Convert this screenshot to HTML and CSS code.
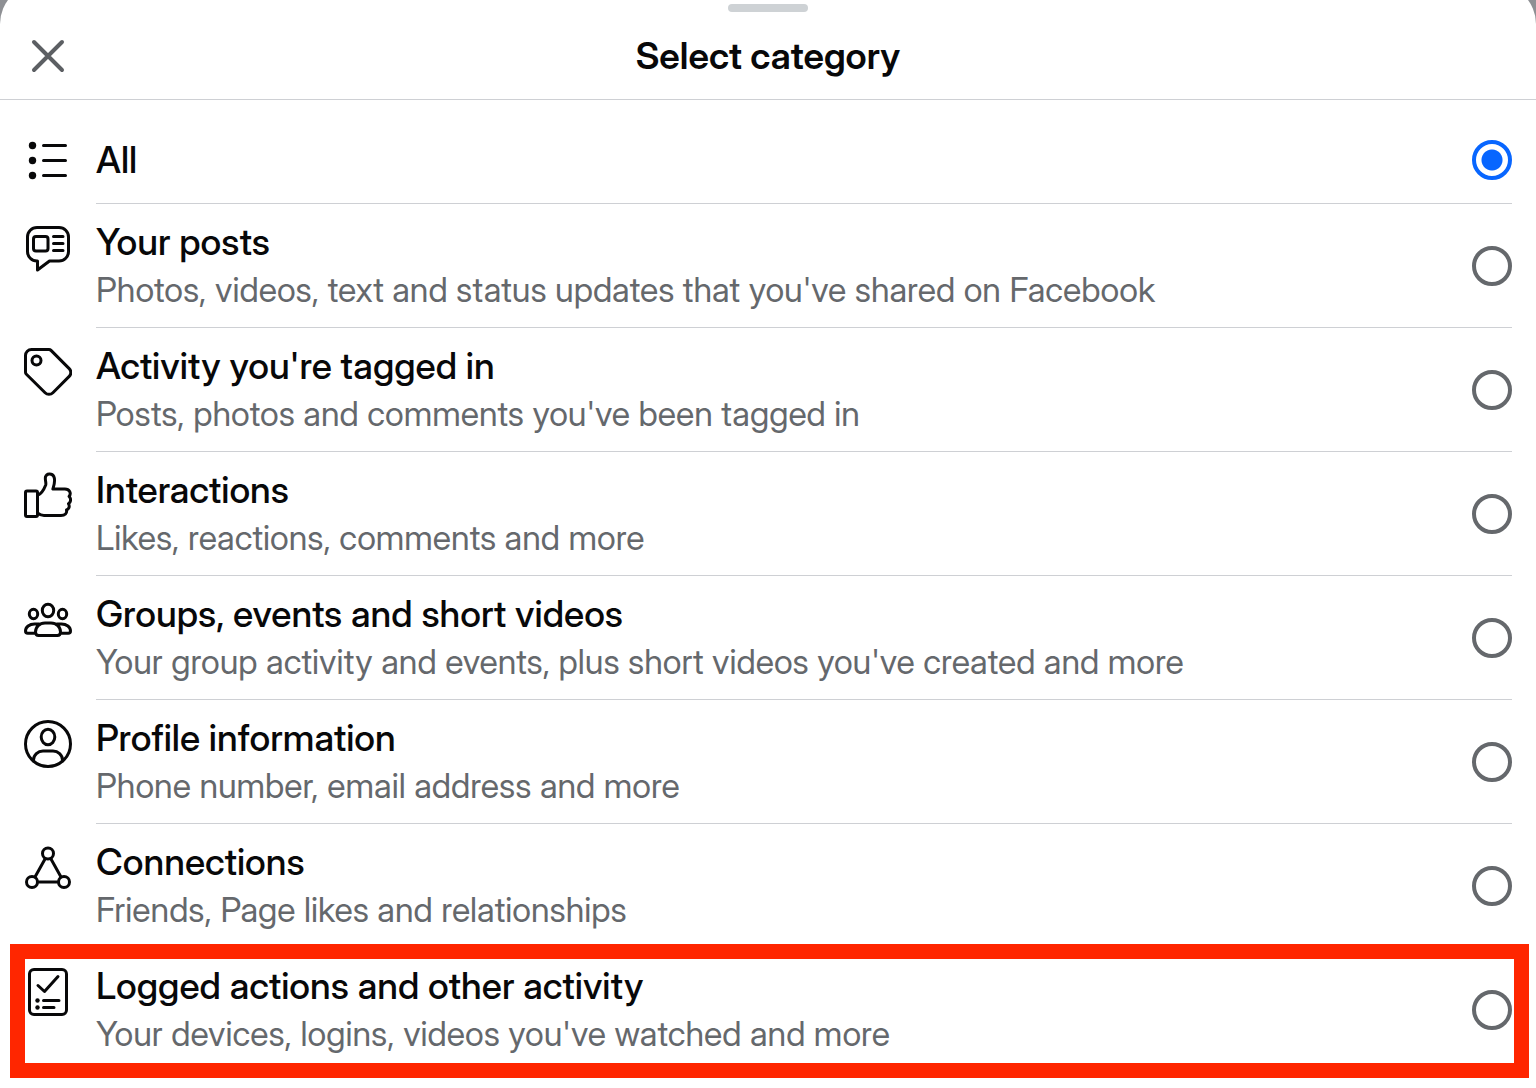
FILE: index.html
```html
<!DOCTYPE html>
<html lang="en">
<head>
<meta charset="utf-8">
<meta name="viewport" content="width=device-width, initial-scale=1">
<title>Select category</title>
<link rel="stylesheet" href="styles.css">
</head>
<body>
<main class="sheet">
  <div class="handle"></div>
  <header class="header">
    <button class="close" type="button" aria-label="Close">
      <svg class="icon close-icon" viewBox="0 0 48 48"><path d="M10 10l28 28M38 10l-28 28"/></svg>
    </button>
    <h1 class="heading">Select category</h1>
  </header>
  <form class="list">
    <label class="row row-single">
      <svg class="icon" viewBox="0 0 48 48"><g fill="currentColor" stroke="none"><circle cx="8.500" cy="9.500" r="3.700"/><circle cx="8.500" cy="24.500" r="3.700"/><circle cx="8.500" cy="39.500" r="3.700"/></g><path d="M19.500 9.500h22M19.500 24.500h22M19.500 39.500h22"/></svg>
      <span class="body"><span class="text"><span class="title">All</span></span><input class="radio" type="radio" name="category" checked></span>
    </label>
    <label class="row">
      <svg class="icon" viewBox="0 0 48 48"><path d="M13 3.500h22a9.500 9.500 0 0 1 9.500 9.500v14.500a9.500 9.500 0 0 1-9.500 9.500H25.500L13.500 46v-9H13a9.500 9.500 0 0 1-9.500-9.500V13A9.500 9.500 0 0 1 13 3.500z"/><rect x="9.500" y="12.500" width="14.500" height="14.500" rx="2.500"/><path d="M29.500 12.500h9.500M29.500 19.500h9.500M29.500 26.500h9.500"/></svg>
      <span class="body"><span class="text"><span class="title">Your posts</span><span class="desc">Photos, videos, text and status updates that you've shared on Facebook</span></span><input class="radio" type="radio" name="category"></span>
    </label>
    <label class="row">
      <svg class="icon" viewBox="0 0 48 48"><path d="M7.500 1.500h17.300a3 3 0 0 1 2.200.9l18.200 18.200a5.500 5.500 0 0 1 0 7.800L28.900 44.700a5.500 5.500 0 0 1-7.800 0L2.400 26.300a3 3 0 0 1-.9-2.200V7.500a6 6 0 0 1 6-6z"/><circle cx="12.500" cy="12.500" r="4.500"/></svg>
      <span class="body"><span class="text"><span class="title">Activity you're tagged in</span><span class="desc">Posts, photos and comments you've been tagged in</span></span><input class="radio" type="radio" name="category"></span>
    </label>
    <label class="row">
      <svg class="icon" viewBox="0 0 48 48"><rect x="1.500" y="19" width="12" height="25.500" rx="1.500"/><path d="M13.500 23.500c4.500-2 6.500-6 8.200-10.500.7-2-.9-5.500-.2-8 .9-3.600 6.500-4 8.300-.5 1.900 3.900.5 8-.9 12.500h12c4.500 0 6.800 4 4.200 7.500 2.200 2.200 1.900 5.500-.6 7.300 1.500 2.500.5 5.200-2 6.200.7 3.200-1.500 5.500-5.500 5.500H20c-3 0-4.500-1-6.500-2.500"/></svg>
      <span class="body"><span class="text"><span class="title">Interactions</span><span class="desc">Likes, reactions, comments and more</span></span><input class="radio" type="radio" name="category"></span>
    </label>
    <label class="row">
      <svg class="icon" viewBox="0 0 48 48"><ellipse cx="24" cy="14.500" rx="5.700" ry="6.300"/><ellipse cx="9.500" cy="18" rx="4.200" ry="4.700"/><ellipse cx="38.500" cy="18" rx="4.200" ry="4.700"/><path d="M21 27h6c5.500 0 9.500 4 9.500 9 0 2.300-1 3.500-3.200 3.500H14.700c-2.200 0-3.200-1.200-3.200-3.500 0-5 4-9 9.500-9zM15 28h-4.500c-5 0-9 3-9 7 0 1.500.8 2.300 2.300 2.300h7.500M33 28h4.500c5 0 9 3 9 7 0 1.500-.8 2.300-2.300 2.300h-7.500"/></svg>
      <span class="body"><span class="text"><span class="title">Groups, events and short videos</span><span class="desc">Your group activity and events, plus short videos you've created and more</span></span><input class="radio" type="radio" name="category"></span>
    </label>
    <label class="row">
      <svg class="icon" viewBox="0 0 48 48"><circle cx="24" cy="24" r="22.500"/><ellipse cx="24" cy="17" rx="6.800" ry="7.700"/><path d="M9.500 41v-1c0-5 4.500-9 9.500-9h10c5 0 9.500 4 9.500 9v1"/></svg>
      <span class="body"><span class="text"><span class="title">Profile information</span><span class="desc">Phone number, email address and more</span></span><input class="radio" type="radio" name="category"></span>
    </label>
    <label class="row">
      <svg class="icon" viewBox="0 0 48 48"><circle cx="24" cy="9.500" r="5.500"/><circle cx="8" cy="38" r="5.500"/><circle cx="40" cy="38" r="5.500"/><path d="M21.300 14.500L11 33M26.700 14.500L37 33M13.500 38h21"/></svg>
      <span class="body"><span class="text"><span class="title">Connections</span><span class="desc">Friends, Page likes and relationships</span></span><input class="radio" type="radio" name="category"></span>
    </label>
    <label class="row row-marked">
      <svg class="icon" viewBox="0 0 48 48"><rect x="5.500" y="1.500" width="37" height="45" rx="4.500"/><path d="M14 17.500l6.500 6 13.500-15M19.500 32.500h15.500M19.500 39.500h10.500"/><g fill="currentColor" stroke="none"><circle cx="13.500" cy="32.500" r="2.200"/><circle cx="13.500" cy="39.500" r="2.200"/></g></svg>
      <span class="body"><span class="text"><span class="title">Logged actions and other activity</span><span class="desc">Your devices, logins, videos you've watched and more</span></span><input class="radio" type="radio" name="category"></span>
    </label>
  </form>
</main>
</body>
</html>
```
FILE: styles.css
```css
* {
  box-sizing: border-box;
}

html {
  background: #8e9094;
}

body {
  margin: 0;
  font-family: "Inter Display", Inter, "Liberation Sans", sans-serif;
  color: #080809;
}

.sheet {
  display: flow-root;
  min-height: calc(100vh + 16px);
  margin-top: -16px;
  padding-top: 20px;
  background: #fff;
  border-radius: 40px 40px 0 0;
}

.handle {
  width: 80px;
  height: 8px;
  margin: 0 auto;
  border-radius: 4px;
  background: #ced2d5;
}

.header {
  display: grid;
  grid-template-columns: 48px 1fr 48px;
  align-items: center;
  height: 88px;
  padding: 0 24px;
  border-bottom: 1px solid #ced0d4;
}

.close {
  width: 48px;
  height: 48px;
  padding: 0;
  border: 0;
  background: none;
  color: #5c5f63;
}

.heading {
  margin: 0;
  font-size: 37px;
  font-weight: 600;
  line-height: 48px;
  text-align: center;
}

.icon {
  display: block;
  flex: none;
  width: 48px;
  height: 48px;
  fill: none;
  stroke: currentColor;
  stroke-width: 3;
  stroke-linecap: round;
  stroke-linejoin: round;
}

.close-icon {
  stroke-width: 4;
}

.list {
  padding-top: 16px;
}

.row {
  position: relative;
  display: flex;
  gap: 24px;
  padding: 0 24px;
}

.row > .icon {
  margin-top: 20px;
}

.body {
  display: flex;
  flex: 1;
  align-items: center;
  justify-content: space-between;
  gap: 24px;
  padding: 14px 0 13px;
  border-bottom: 1px solid #ced0d4;
}

.row-single .body {
  padding: 20px 0 19px;
}

.title,
.desc {
  display: block;
  line-height: 48px;
}

.title {
  font-size: 37px;
  font-weight: 500;
}

.desc {
  font-size: 34px;
  color: #65686c;
}

.radio {
  flex: none;
  appearance: none;
  width: 40px;
  height: 40px;
  margin: 0;
  border: 4px solid #65686c;
  border-radius: 50%;
}

.radio:checked {
  border-color: #0866ff;
  background: radial-gradient(circle, #0866ff 10px, transparent 11px);
}

.row-marked .body {
  border-bottom-color: transparent;
}

.row-marked::after {
  content: "";
  position: absolute;
  inset: -4px 7px -6px 10px;
  border: 15px solid #ff2600;
  pointer-events: none;
}
```
